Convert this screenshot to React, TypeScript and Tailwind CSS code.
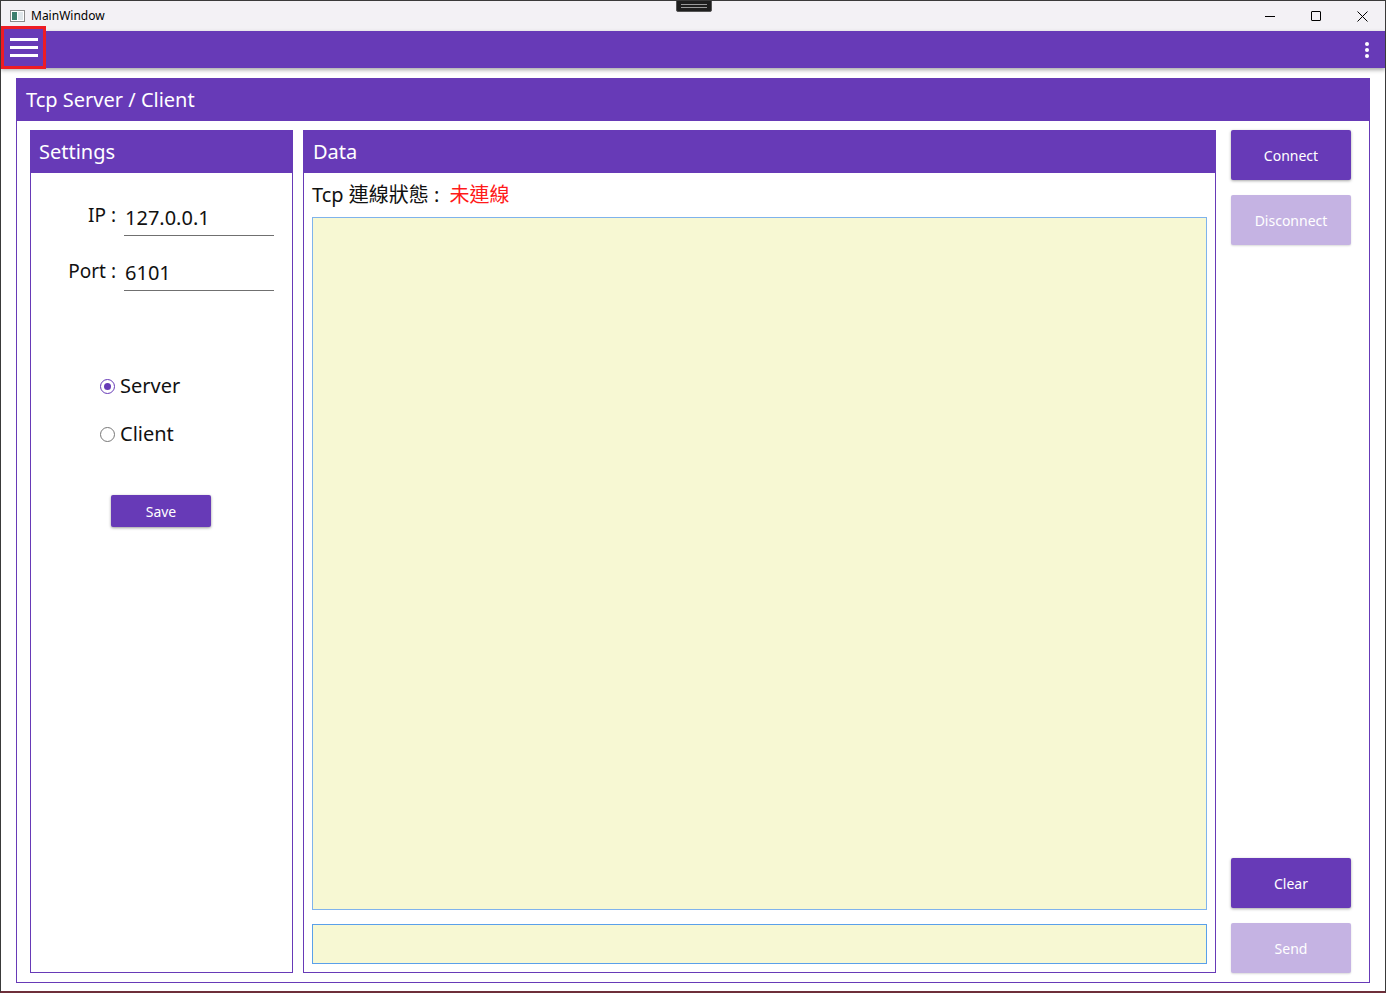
import * as React from "react";

const FONT = { fontFamily: '"Noto Sans", "Open Sans", "Noto Sans CJK TC", sans-serif' };

function TitleBar() {
  return (
    <div className="relative flex h-[30px] shrink-0 items-center bg-[#f3f1f5]">
      <div className="ml-[9px] flex h-[12px] w-[15px] items-center gap-[1px] border border-[#8a8a8a] bg-white px-[1px]">
        <div className="h-[8px] w-[5px] bg-[#3d7f6e]" />
        <div className="h-[8px] w-[6px] bg-[#dfe6ea]" />
      </div>
      <span className="ml-[6px] text-[12px] text-black">MainWindow</span>
      <div className="absolute left-[675px] -top-px flex h-[12px] w-[36px] flex-col items-center justify-center gap-[2px] rounded-b-[2px] border border-[#555] bg-[#1e1e1e]">
        <div className="h-px w-[26px] bg-[#9a9a9a]" />
        <div className="h-px w-[26px] bg-[#9a9a9a]" />
      </div>
      <div className="ml-auto flex h-full items-center">
        <div className="flex h-full w-[46px] items-center justify-center">
          <div className="h-px w-[10px] bg-black" />
        </div>
        <div className="flex h-full w-[46px] items-center justify-center">
          <div className="h-[10px] w-[10px] rounded-[1px] border border-black" />
        </div>
        <div className="flex h-full w-[46px] items-center justify-center">
          <svg width="11" height="11" viewBox="0 0 11 11">
            <path d="M0.5 0.5 L10.5 10.5 M10.5 0.5 L0.5 10.5" stroke="black" strokeWidth="1" />
          </svg>
        </div>
      </div>
    </div>
  );
}

function AppBar() {
  return (
    <div className="relative z-10 flex h-[37px] shrink-0 items-center bg-[#673ab7] shadow-[0_2px_4px_rgba(0,0,0,0.35)]">
      <div className="-mt-[4px] flex h-[43px] w-[45px] flex-col items-center justify-center gap-[5px] border-[3px] border-[#ee1c24] bg-[#673ab7]">
        <div className="h-[3px] w-[28px] bg-white" />
        <div className="h-[3px] w-[28px] bg-white" />
        <div className="h-[3px] w-[28px] bg-white" />
      </div>
      <div className="ml-auto mr-[16px] flex flex-col gap-[2px]">
        <div className="h-[4px] w-[4px] rounded-full bg-white" />
        <div className="h-[4px] w-[4px] rounded-full bg-white" />
        <div className="h-[4px] w-[4px] rounded-full bg-white" />
      </div>
    </div>
  );
}

function PanelHeader({ title, pl }: { title: string; pl: string }) {
  return (
    <div className={`flex h-[42px] shrink-0 items-center bg-[#673ab7] text-[20px] text-white ${pl}`}>
      {title}
    </div>
  );
}

function Field({ label, value }: { label: string; value: string }) {
  return (
    <div className="flex items-end">
      <span className="w-[93px] pb-[6px] pr-[8px] text-right text-[19px] text-[#111]">{label}</span>
      <div className="w-[150px] border-b border-[#707070] pb-[2px] pl-[1px] text-[20px] text-[#111]">{value}</div>
    </div>
  );
}

function Radio({ label, checked }: { label: string; checked?: boolean }) {
  return (
    <div className="flex items-center gap-[5px] text-[20px] text-[#111]">
      <div
        className={`flex h-[15px] w-[15px] items-center justify-center rounded-full border-[1.5px] ${
          checked ? "border-[#673ab7]" : "border-[#777]"
        }`}
      >
        {checked && <div className="h-[7px] w-[7px] rounded-full bg-[#673ab7]" />}
      </div>
      {label}
    </div>
  );
}

function ActionButton({ label, disabled }: { label: string; disabled?: boolean }) {
  return (
    <button
      className={`flex h-[50px] w-[120px] items-center justify-center rounded-[2px] text-[14px] text-white ${
        disabled ? "bg-[#c5b3e3] shadow-[0_1px_2px_rgba(0,0,0,0.15)]" : "bg-[#673ab7] shadow-[0_1px_3px_rgba(0,0,0,0.35)]"
      }`}
    >
      {label}
    </button>
  );
}

export default function App() {
  return (
    <div
      style={FONT}
      className="flex h-[993px] w-[1386px] flex-col overflow-hidden border-l border-t border-r border-[#3a3a3a] border-b-2 border-b-[#6e2f3a] bg-white"
    >
      <TitleBar />
      <AppBar />

      <div className="flex min-h-0 flex-1 flex-col px-[15px] pb-[8px] pt-[10px]">
        <div className="flex min-h-0 flex-1 flex-col border border-[#673ab7]">
          <PanelHeader title="Tcp Server / Client" pl="pl-[9px]" />

          <div className="flex min-h-0 flex-1 pb-[9px] pl-[13px] pr-[18px] pt-[9px]">
            {/* Settings */}
            <div className="flex w-[263px] shrink-0 flex-col border border-[#673ab7]">
              <PanelHeader title="Settings" pl="pl-[8px]" />
              <div className="flex flex-col pt-[28px]">
                <Field label="IP :" value="127.0.0.1" />
                <div className="h-[21px]" />
                <Field label="Port :" value="6101" />
                <div className="ml-[69px] mt-[80px] flex flex-col gap-[18px]">
                  <Radio label="Server" checked />
                  <Radio label="Client" />
                </div>
                <button className="ml-[80px] mt-[46px] flex h-[32px] w-[100px] items-center justify-center rounded-[2px] bg-[#673ab7] text-[14px] text-white shadow-[0_1px_3px_rgba(0,0,0,0.4)]">
                  Save
                </button>
              </div>
            </div>

            {/* Data */}
            <div className="ml-[10px] flex min-w-0 flex-1 flex-col border border-[#673ab7]">
              <PanelHeader title="Data" pl="pl-[9px]" />
              <div className="flex min-h-0 flex-1 flex-col px-[8px] pb-[8px]">
                <div className="flex h-[44px] shrink-0 items-center text-[20px] text-[#111]">
                  <span>Tcp 連線狀態 :</span>
                  <span className="ml-[10px] text-[#ff1a1a]">未連線</span>
                </div>
                <div className="min-h-0 flex-1 border border-[#7fb3ec] bg-[#f7f8d3]" />
                <div className="mt-[14px] h-[40px] shrink-0 border border-[#5aa0ea] bg-[#f7f8d3]" />
              </div>
            </div>

            {/* Buttons */}
            <div className="ml-[15px] flex w-[120px] shrink-0 flex-col">
              <div className="flex flex-col gap-[15px]">
                <ActionButton label="Connect" />
                <ActionButton label="Disconnect" disabled />
              </div>
              <div className="mt-auto flex flex-col gap-[15px]">
                <ActionButton label="Clear" />
                <ActionButton label="Send" disabled />
              </div>
            </div>
          </div>
        </div>
      </div>
    </div>
  );
}
